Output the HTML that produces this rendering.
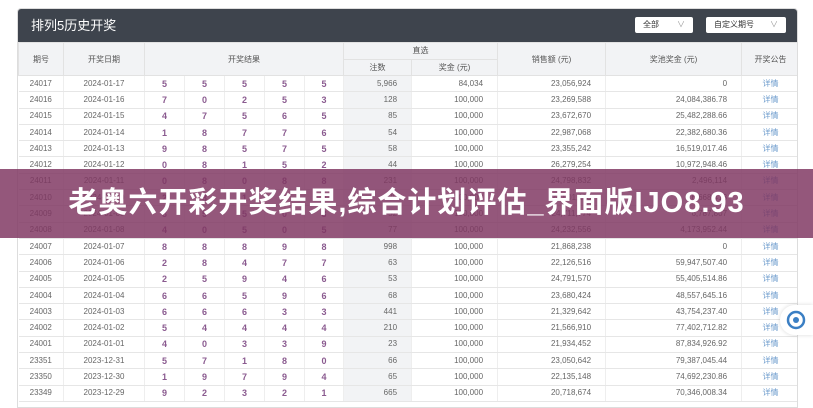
<!DOCTYPE html>
<html><head><meta charset="utf-8"><style>
*{margin:0;padding:0;box-sizing:border-box}
body{width:813px;height:400px;overflow:hidden;background:#fff;font-family:"Liberation Sans","Noto Sans CJK SC",sans-serif;position:relative}
.card{position:absolute;left:17px;top:8px;width:781px;height:400px;border:1px solid #ddd;border-radius:4px 4px 0 0;overflow:hidden}
.hd{height:33px;background:#3e444d;color:#fff;font-size:13px;line-height:33px;padding-left:13px}
.sel{position:absolute;top:8px;height:16px;background:#fff;border-radius:2px;font-size:8px;color:#333;line-height:16px;padding-left:8px}
.sel span{position:absolute;right:8px;color:#999}
table{border-collapse:collapse;table-layout:fixed;width:781px;font-size:8px;color:#666}
th{background:#f2f3f5;font-weight:normal;color:#555;border:1px solid #e2e2e2;height:16.5px}
tr.d{height:16.3px}
td{border-bottom:1px solid #e6e6e6;border-right:1px solid #eee;text-align:center;padding:0;line-height:14px}
td.n{color:#8a5a8f;font-size:9px;font-weight:bold}
td.g{background:#f2f3f5;text-align:right;padding-right:14px}
td.r{text-align:right;padding-right:14px}
td.l{color:#6c9bcc}
.ban{position:absolute;left:0;top:169px;width:813px;height:69px;background:rgba(128,55,98,0.84);color:#fff;font-size:29px;font-weight:bold;text-align:center;line-height:69px;letter-spacing:1px}
.ic{position:absolute;left:780px;top:305px;width:33px;height:30px;background:#fff;border-radius:15px 0 0 15px;box-shadow:0 0 4px rgba(0,0,0,.15)}
</style></head><body>
<div class="card">
<div class="hd">排列5历史开奖</div>
<div class="sel" style="left:617px;width:58px">全部<span>∨</span></div>
<div class="sel" style="left:688px;width:80px">自定义期号<span>∨</span></div>
<table>
<colgroup><col style="width:45px"><col style="width:81px"><col style="width:40px"><col style="width:40px"><col style="width:40px"><col style="width:40px"><col style="width:39px"><col style="width:68px"><col style="width:86px"><col style="width:108px"><col style="width:136px"><col style="width:58px"></colgroup>
<tr><th rowspan="2">期号</th><th rowspan="2">开奖日期</th><th colspan="5" rowspan="2">开奖结果</th><th colspan="2">直选</th><th rowspan="2">销售额 (元)</th><th rowspan="2">奖池奖金 (元)</th><th rowspan="2">开奖公告</th></tr>
<tr><th>注数</th><th>奖金 (元)</th></tr>
<tr class="d"><td>24017</td><td>2024-01-17</td><td class="n">5</td><td class="n">5</td><td class="n">5</td><td class="n">5</td><td class="n">5</td><td class="g">5,966</td><td class="r">84,034</td><td class="r">23,056,924</td><td class="r">0</td><td class="l">详情</td></tr>
<tr class="d"><td>24016</td><td>2024-01-16</td><td class="n">7</td><td class="n">0</td><td class="n">2</td><td class="n">5</td><td class="n">3</td><td class="g">128</td><td class="r">100,000</td><td class="r">23,269,588</td><td class="r">24,084,386.78</td><td class="l">详情</td></tr>
<tr class="d"><td>24015</td><td>2024-01-15</td><td class="n">4</td><td class="n">7</td><td class="n">5</td><td class="n">6</td><td class="n">5</td><td class="g">85</td><td class="r">100,000</td><td class="r">23,672,670</td><td class="r">25,482,288.66</td><td class="l">详情</td></tr>
<tr class="d"><td>24014</td><td>2024-01-14</td><td class="n">1</td><td class="n">8</td><td class="n">7</td><td class="n">7</td><td class="n">6</td><td class="g">54</td><td class="r">100,000</td><td class="r">22,987,068</td><td class="r">22,382,680.36</td><td class="l">详情</td></tr>
<tr class="d"><td>24013</td><td>2024-01-13</td><td class="n">9</td><td class="n">8</td><td class="n">5</td><td class="n">7</td><td class="n">5</td><td class="g">58</td><td class="r">100,000</td><td class="r">23,355,242</td><td class="r">16,519,017.46</td><td class="l">详情</td></tr>
<tr class="d"><td>24012</td><td>2024-01-12</td><td class="n">0</td><td class="n">8</td><td class="n">1</td><td class="n">5</td><td class="n">2</td><td class="g">44</td><td class="r">100,000</td><td class="r">26,279,254</td><td class="r">10,972,948.46</td><td class="l">详情</td></tr>
<tr class="d"><td>24011</td><td>2024-01-11</td><td class="n">0</td><td class="n">8</td><td class="n">0</td><td class="n">8</td><td class="n">8</td><td class="g">231</td><td class="r">100,000</td><td class="r">24,798,832</td><td class="r">2,496,114</td><td class="l">详情</td></tr>
<tr class="d"><td>24010</td><td>2024-01-10</td><td class="n">2</td><td class="n">3</td><td class="n">1</td><td class="n">6</td><td class="n">4</td><td class="g">86</td><td class="r">100,000</td><td class="r">24,501,116</td><td class="r">6,668,413</td><td class="l">详情</td></tr>
<tr class="d"><td>24009</td><td>2024-01-09</td><td class="n">3</td><td class="n">5</td><td class="n">5</td><td class="n">0</td><td class="n">3</td><td class="g">52</td><td class="r">100,000</td><td class="r">24,711,774</td><td class="r">6,787,807</td><td class="l">详情</td></tr>
<tr class="d"><td>24008</td><td>2024-01-08</td><td class="n">4</td><td class="n">0</td><td class="n">5</td><td class="n">0</td><td class="n">5</td><td class="g">77</td><td class="r">100,000</td><td class="r">24,232,556</td><td class="r">4,173,952.44</td><td class="l">详情</td></tr>
<tr class="d"><td>24007</td><td>2024-01-07</td><td class="n">8</td><td class="n">8</td><td class="n">8</td><td class="n">9</td><td class="n">8</td><td class="g">998</td><td class="r">100,000</td><td class="r">21,868,238</td><td class="r">0</td><td class="l">详情</td></tr>
<tr class="d"><td>24006</td><td>2024-01-06</td><td class="n">2</td><td class="n">8</td><td class="n">4</td><td class="n">7</td><td class="n">7</td><td class="g">63</td><td class="r">100,000</td><td class="r">22,126,516</td><td class="r">59,947,507.40</td><td class="l">详情</td></tr>
<tr class="d"><td>24005</td><td>2024-01-05</td><td class="n">2</td><td class="n">5</td><td class="n">9</td><td class="n">4</td><td class="n">6</td><td class="g">53</td><td class="r">100,000</td><td class="r">24,791,570</td><td class="r">55,405,514.86</td><td class="l">详情</td></tr>
<tr class="d"><td>24004</td><td>2024-01-04</td><td class="n">6</td><td class="n">6</td><td class="n">5</td><td class="n">9</td><td class="n">6</td><td class="g">68</td><td class="r">100,000</td><td class="r">23,680,424</td><td class="r">48,557,645.16</td><td class="l">详情</td></tr>
<tr class="d"><td>24003</td><td>2024-01-03</td><td class="n">6</td><td class="n">6</td><td class="n">6</td><td class="n">3</td><td class="n">3</td><td class="g">441</td><td class="r">100,000</td><td class="r">21,329,642</td><td class="r">43,754,237.40</td><td class="l">详情</td></tr>
<tr class="d"><td>24002</td><td>2024-01-02</td><td class="n">5</td><td class="n">4</td><td class="n">4</td><td class="n">4</td><td class="n">4</td><td class="g">210</td><td class="r">100,000</td><td class="r">21,566,910</td><td class="r">77,402,712.82</td><td class="l">详情</td></tr>
<tr class="d"><td>24001</td><td>2024-01-01</td><td class="n">4</td><td class="n">0</td><td class="n">3</td><td class="n">3</td><td class="n">9</td><td class="g">23</td><td class="r">100,000</td><td class="r">21,934,452</td><td class="r">87,834,926.92</td><td class="l">详情</td></tr>
<tr class="d"><td>23351</td><td>2023-12-31</td><td class="n">5</td><td class="n">7</td><td class="n">1</td><td class="n">8</td><td class="n">0</td><td class="g">66</td><td class="r">100,000</td><td class="r">23,050,642</td><td class="r">79,387,045.44</td><td class="l">详情</td></tr>
<tr class="d"><td>23350</td><td>2023-12-30</td><td class="n">1</td><td class="n">9</td><td class="n">7</td><td class="n">9</td><td class="n">4</td><td class="g">65</td><td class="r">100,000</td><td class="r">22,135,148</td><td class="r">74,692,230.86</td><td class="l">详情</td></tr>
<tr class="d"><td>23349</td><td>2023-12-29</td><td class="n">9</td><td class="n">2</td><td class="n">3</td><td class="n">2</td><td class="n">1</td><td class="g">665</td><td class="r">100,000</td><td class="r">20,718,674</td><td class="r">70,346,008.34</td><td class="l">详情</td></tr>
</table>
</div>
<div class="ban">老奥六开彩开奖结果,综合计划评估_界面版IJO8.93</div>
<div class="ic"><svg width="33" height="30" viewBox="0 0 33 30"><circle cx="16" cy="15" r="8" fill="none" stroke="#3b7fc4" stroke-width="2.5"/><circle cx="16" cy="15" r="3" fill="#3b7fc4"/></svg></div>
</body></html>
